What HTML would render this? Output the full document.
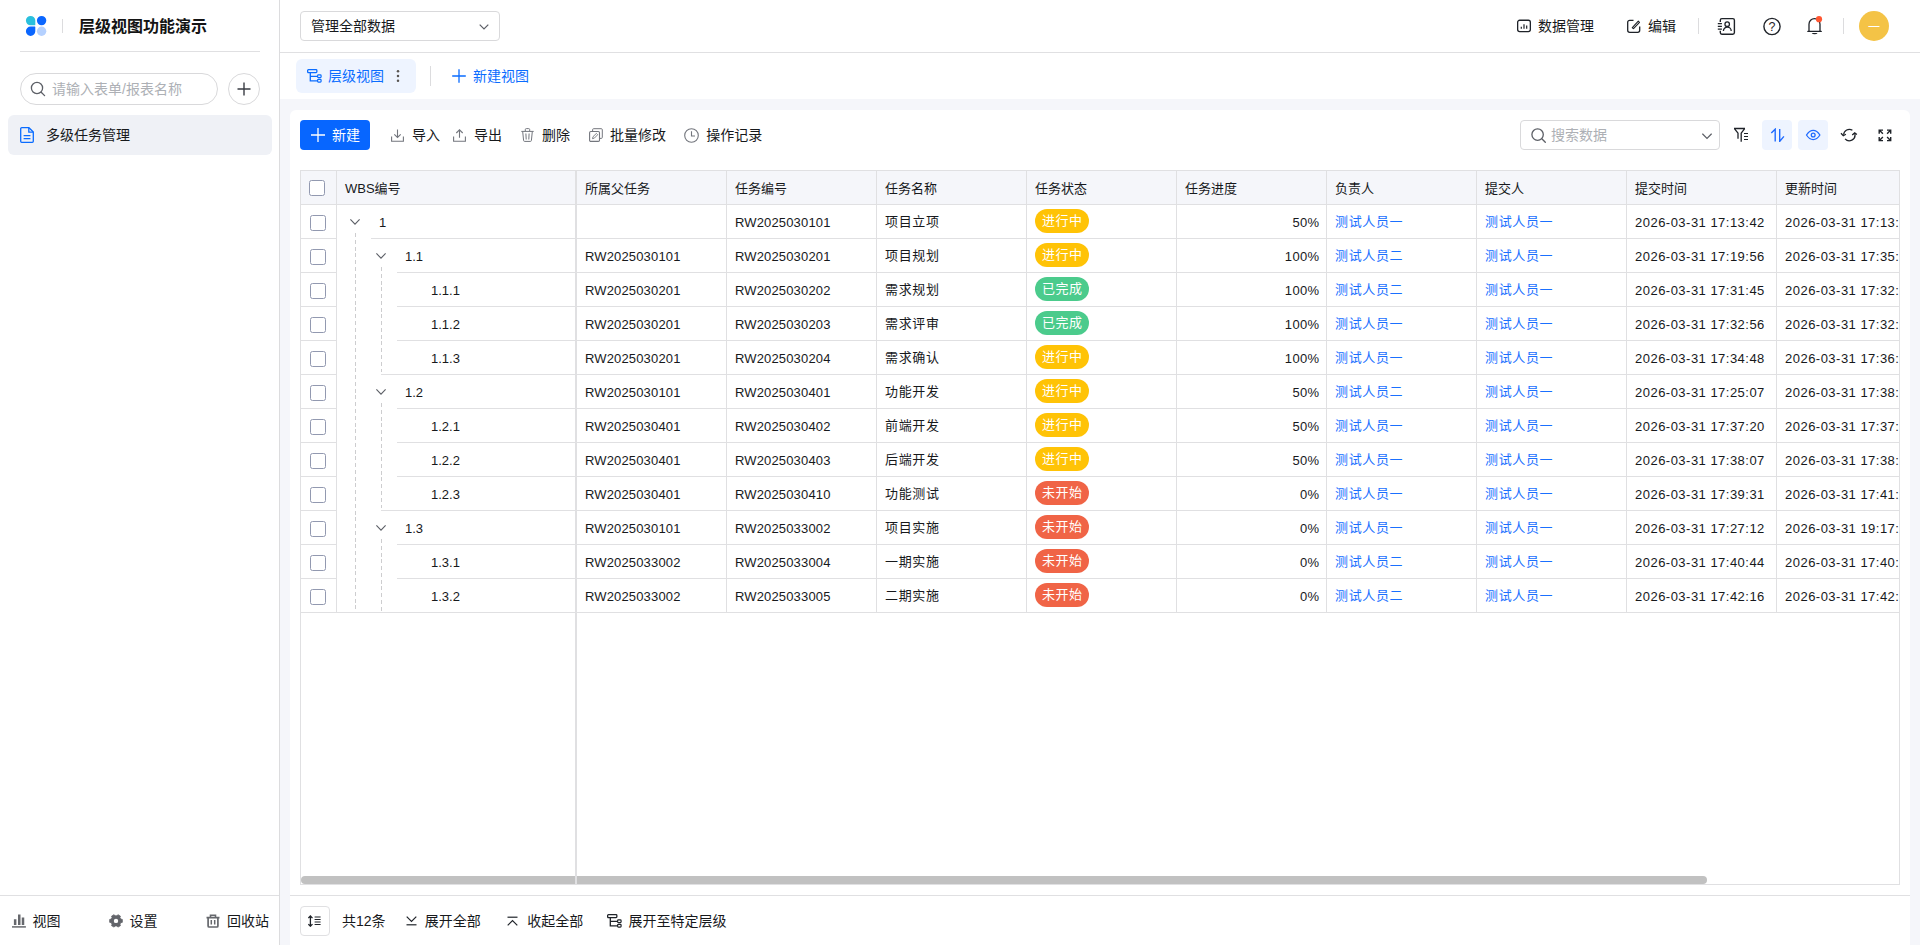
<!DOCTYPE html>
<html lang="zh-CN">
<head>
<meta charset="utf-8">
<title>层级视图功能演示</title>
<style>
*{box-sizing:border-box;margin:0;padding:0}
html,body{width:1920px;height:945px;overflow:hidden}
body{position:relative;background:#f5f6fa;font-family:"Liberation Sans","Noto Sans CJK SC",sans-serif;font-size:14px;color:#17191c;-webkit-font-smoothing:antialiased}
svg{display:block;flex:none}
a{color:#1a70ff;text-decoration:none}
span{white-space:nowrap}
/* ---------- sidebar */
.sidebar{position:absolute;left:0;top:0;width:280px;height:945px;background:#fff;border-right:1px solid #dcdcde}
.logo{position:absolute;left:25px;top:15px;width:22px;height:22px}
.logo-div{position:absolute;left:62px;top:19px;width:1px;height:14px;background:#dcdcde}
.app-title{position:absolute;left:79px;top:14px;height:24px;line-height:24px;font-size:16px;font-weight:700;color:#141414}
.side-line{position:absolute;left:20px;top:51px;width:240px;height:1px;background:#e0e0e2}
.side-search{position:absolute;left:20px;top:73px;width:198px;height:32px;border:1px solid #d9d9db;border-radius:16px;display:flex;align-items:center;padding-left:10px;background:#fff}
.side-search .ph{margin-left:7px;color:#adb0b5;font-size:14px;line-height:20px}
.side-add{position:absolute;left:228px;top:73px;width:32px;height:32px;border:1px solid #d9d9db;border-radius:50%;display:flex;align-items:center;justify-content:center}
.side-item{position:absolute;left:8px;top:115px;width:264px;height:40px;border-radius:6px;background:#eff1f6;display:flex;align-items:center;padding-left:12px;color:#17191c}
.side-item span{margin-left:12px;line-height:20px}
.side-foot{position:absolute;left:0;top:895px;width:279px;height:50px;border-top:1px solid #e0e0e2}
.sf{position:absolute;top:15px;height:20px;display:flex;align-items:center;line-height:20px;color:#17191c}
.sf span{margin-left:6px}
.sf1{left:12px}.sf2{left:109px}.sf3{left:206px}
/* ---------- topbar */
.topbar{position:absolute;left:280px;top:0;width:1640px;height:53px;background:#fff;border-bottom:1px solid #e0e0e2}
.sel{position:absolute;left:20px;top:11px;width:200px;height:30px;border:1px solid #d9d9db;border-radius:4px;display:flex;align-items:center;padding-left:10px;line-height:20px}
.sel svg{position:absolute;right:10px;top:10px}
.tb-item{position:absolute;top:16px;height:20px;display:flex;align-items:center;line-height:20px}
.tb-item span{margin-left:7px}
.t-data{left:1237px}.t-edit{left:1347px}
.vdiv{position:absolute;top:18px;width:1px;height:16px;background:#dcdcde}
.vd1{left:1418px}.vd2{left:1563px}
.ico{position:absolute;top:16px;width:20px;height:20px}
.i-contact{left:1437px}.i-help{left:1482px}.i-bell{left:1524px}
.avatar{position:absolute;left:1579px;top:11px;width:30px;height:30px;border-radius:50%;background:#f4c346;color:#fff;display:flex;align-items:center;justify-content:center;font-size:12px;line-height:30px}
/* ---------- tabs */
.tabbar{position:absolute;left:280px;top:53px;width:1640px;height:46px;background:#fff}
.tab-active{position:absolute;left:16px;top:6px;width:120px;height:34px;border-radius:6px;background:#eef4ff;color:#0a6cff;display:flex;align-items:center;padding-left:11px;line-height:20px}
.tab-active span{margin-left:7px}
.tab-active svg.dots{margin-left:10px}
.tab-div{position:absolute;left:150px;top:14px;width:1px;height:18px;background:#dcdcde}
.tab-new{position:absolute;left:172px;top:13px;height:20px;display:flex;align-items:center;color:#0a6cff;line-height:20px}
.tab-new span{margin-left:7px}
/* ---------- card */
.card{position:absolute;left:290px;top:110px;width:1620px;height:835px;background:#fff;border-radius:6px 6px 0 0}
.btn-new{position:absolute;left:10px;top:10px;width:70px;height:30px;border-radius:4px;background:#0a6cff;color:#fff;display:flex;align-items:center;padding-left:11px;line-height:20px}
.btn-new span{margin-left:8px}
.tool{position:absolute;top:15px;height:20px;display:flex;align-items:center;line-height:20px;color:#17191c}
.tool span{margin-left:8px}
.tl-import{left:101px}.tl-export{left:163px}.tl-del{left:231px}.tl-batch{left:298px}.tl-log{left:394px}
.search{position:absolute;left:1230px;top:10px;width:200px;height:30px;border:1px solid #d9d9db;border-radius:4px;display:flex;align-items:center;padding-left:10px}
.search .ph{margin-left:6px;color:#adb0b5;line-height:20px}
.search svg.cv{position:absolute;right:7px;top:10px}
.tbtn{position:absolute;top:10px;width:30px;height:30px;border-radius:4px;display:flex;align-items:center;justify-content:center}
.tbtn.on{background:#eef4ff}
.b-filter{left:1436px}.b-sort{left:1472px}.b-eye{left:1508px}.b-refresh{left:1544px}.b-full{left:1580px}
/* ---------- grid */
.grid{position:absolute;left:10px;top:60px;width:1600px;height:715px;overflow:hidden;font-size:13px}
.grid::after{content:"";position:absolute;left:0;top:0;right:0;bottom:0;border:1px solid #e0e0e2;pointer-events:none}
.thead,.tr{position:absolute;left:0;width:1700px}
.thead{top:0;height:35px;background:#f5f6fa;font-size:13px}
.thead .c{height:35px;padding-top:1px;color:#17191c}
.tr{height:34px}
.c{position:absolute;top:0;height:34px;border-right:1px solid #e0e0e2;border-bottom:1px solid #e0e0e2;display:flex;align-items:center;padding-left:8px;overflow:hidden}
.c span,.c a{line-height:20px}
.c-chk{left:0;width:37px;padding-left:10px}
.thead .c-chk{padding-left:9px}
.c-wbs{left:37px;width:238px;border-right:none;border-bottom:none}
.thead .c-wbs{border-bottom:1px solid #e0e0e2}
.c-par{left:277px;width:150px}
.c-code{left:427px;width:150px}
.c-name{left:577px;width:150px}
.c-st{left:727px;width:150px}
.c-pg{left:877px;width:150px;justify-content:flex-end;padding-right:7px}
.thead .c-pg{justify-content:flex-start}
.c-own{left:1027px;width:150px}
.c-sub{left:1177px;width:150px}
.c-t1{left:1327px;width:150px}
.c-t2{left:1477px;width:150px}
.cb{display:block;width:16px;height:16px;border:1px solid #9299b0;border-radius:2.5px;background:#fff;flex:none}
.tr .c-wbs::after{content:"";position:absolute;left:0;right:0;bottom:0;height:1px;background:#e0e0e2}
.tr .c-wbs.bl-1::after{left:34px}
.tr .c-wbs.bl-2::after{left:60px}
.tr .c-wbs.bl-1x::after{left:44px}
.tr .c-wbs svg{position:absolute;top:14px}
.lv0 svg{left:13px}.lv1 svg{left:39px}.lv2 svg{left:65px}
.tr .lv0{padding-left:42px}.tr .lv1{padding-left:68px}.tr .lv2{padding-left:94px}
.pill{display:block;height:24px;line-height:24px;padding:0 7px;letter-spacing:.45px;margin-top:-1px;border-radius:12px;color:#fff;font-size:13px;font-weight:400;white-space:nowrap}
.s-doing{background:#ffc306}
.s-done{background:#4bcb8c}
.s-todo{background:#f06446}
.guide{position:absolute;width:1px;background:repeating-linear-gradient(to bottom,#cdcdcf 0,#cdcdcf 4px,transparent 4px,transparent 6.77px)}
.g0{left:55px;top:63px;height:378px}
.g1a{left:81px;top:97px;height:105px}
.g1b{left:81px;top:233px;height:105px}
.g1c{left:81px;top:369px;height:72px}
.wbs-cover{display:none}
.freeze{position:absolute;left:275px;top:0;width:2px;height:715px;background:#e0e0e2}
.emptyline{display:none}
.hscroll{position:absolute;left:1px;top:706px;width:1406px;height:8px;border-radius:4px;background:#c1c1c1}
/* ---------- footer */
.foot-line{position:absolute;left:0;top:785px;width:1620px;height:1px;background:#e0e0e2}
.fbtn{position:absolute;left:10px;top:796px;width:30px;height:30px;border:1px solid #e0e0e2;border-radius:4px;display:flex;align-items:center;justify-content:center}
.ft{position:absolute;top:801px;height:20px;display:flex;align-items:center;line-height:20px;color:#17191c}
.ft svg{margin-right:7px}
.ft-total{left:52px}.ft-exp{left:114px}.ft-col{left:216px}.ft-lvl{left:318px}

.tr .c-name span,.tr a{font-size:13px;letter-spacing:.65px;position:relative;top:.5px}
.tr .c-par span,.tr .c-code span{letter-spacing:.15px}
.tr .c-par span,.tr .c-code span,.tr .c-pg span,.tr .c-t1 span,.tr .c-t2 span,.tr .c-wbs span{position:relative;top:1px}
.thead .c span{position:relative;top:.5px}
.tr .c-t1 span,.tr .c-t2 span{letter-spacing:.4px}
.app-title{top:15px}
.side-search{padding-left:9px}
.side-search .ph{margin-left:6px}

.avatar span{position:relative;top:1.500px}
.i-help{top:15.500px;height:21px}
.btn-new{background:#0766ff}
.btn-new span{margin-left:7px}
.search .ph{margin-left:5px}

.sf1 span{margin-left:6.500px}
.sf2 span{margin-left:6.500px}
.sf3 span{margin-left:7px}
.ft-exp{left:115.500px}.ft-exp svg{margin-right:8.300px}
.ft-col{left:216.800px}.ft-col svg{margin-right:9.500px}
.ft-lvl{left:317.200px}.ft-lvl svg{margin-right:6.300px}
.b-filter svg{position:relative;top:-.8px}

.tab-active span{margin-left:6px}
.tab-active svg.dots{margin-left:11.500px}
.tab-div{top:13px;height:20px}
.tr .c-t1 span,.tr .c-t2 span{letter-spacing:.48px}

.tl-batch{left:299px}.tl-batch span{margin-left:7px}
.tl-log span{margin-left:7.300px}
.tr .cb{position:relative;top:1px}
.freeze{z-index:2}
.thead .c span{top:1px}
.tr .c-pg span{letter-spacing:.3px}
.c-pg{padding-right:6.700px}
.fbtn svg{position:relative;left:-.5px}
</style>
</head>
<body>
<div class="sidebar">
 <div class="logo"><svg width="22" height="22" viewBox="0 0 22 22" fill="none" ><path d="M5.6 0.9a4.7 4.7 0 0 1 4.7 4.7v4.2a.5.5 0 0 1-.5.5H5.6a4.7 4.7 0 0 1 0-9.4z" fill="#2ac0dd"/><path d="M16.6 0.9a4.7 4.7 0 1 1 0 9.4a4.7 4.7 0 0 1 0-9.4z" fill="#0a66ff"/><path d="M5.6 11.6h4.2a.5.5 0 0 1 .5.5v4.2a4.7 4.7 0 1 1-4.7-4.7z" fill="#0a66ff"/><path d="M16.6 11.6a4.7 4.7 0 1 1 0 9.4a4.7 4.7 0 0 1 0-9.4z" fill="#b5d1ff"/></svg></div>
 <div class="logo-div"></div>
 <div class="app-title">层级视图功能演示</div>
 <div class="side-line"></div>
 <div class="side-search"><svg width="16" height="16" viewBox="0 0 16 16" fill="none" ><circle cx="7" cy="7" r="5.6" stroke="#5c5f66" stroke-width="1.3"/><path d="M11.2 11.2L14.6 14.6" stroke="#5c5f66" stroke-width="1.3" stroke-linecap="round"/></svg><span class="ph">请输入表单/报表名称</span></div>
 <div class="side-add"><svg width="14" height="14" viewBox="0 0 14 14" fill="none" ><path d="M7 0.5V13.5M0.5 7H13.5" stroke="#3a3d44" stroke-width="1.4"/></svg></div>
 <div class="side-item"><svg width="14" height="16" viewBox="0 0 14 16" fill="none" ><path d="M1.6 0.7H9L13.3 5V14.3a1 1 0 0 1-1 1H1.7a1 1 0 0 1-1-1V1.7a1 1 0 0 1 1-1z" stroke="#0a6cff" stroke-width="1.3" stroke-linejoin="round"/><path d="M8.8 0.9V5.2H13.1" stroke="#0a6cff" stroke-width="1.3" stroke-linejoin="round"/><path d="M3.6 8.6H10.4M3.6 11.6H10.4" stroke="#0a6cff" stroke-width="1.3"/></svg><span>多级任务管理</span></div>
 <div class="side-foot">
  <div class="sf sf1"><svg width="14" height="14" viewBox="0 0 14 14" fill="none" ><path d="M3.150 5.200V11M7.250 0.600V11M11 3.400V11" stroke="#66686d" stroke-width="2.500"/><path d="M0 12.900H13.900" stroke="#66686d" stroke-width="1.500"/></svg><span>视图</span></div>
  <div class="sf sf2"><svg width="14" height="14" viewBox="0 0 14 14" fill="none" ><path d="M11.76 5.07L13.33 5.44L13.33 8.36L11.76 8.73L10.96 10.11L11.43 11.65L8.90 13.12L7.80 11.94L6.20 11.94L5.10 13.12L2.57 11.65L3.04 10.11L2.24 8.73L0.67 8.36L0.67 5.44L2.24 5.07L3.04 3.69L2.57 2.15L5.10 0.68L6.20 1.86L7.80 1.86L8.90 0.68L11.43 2.15L10.96 3.69z" fill="#63656b" stroke="#63656b" stroke-width="0.800" stroke-linejoin="round"/><circle cx="7" cy="6.900" r="2.200" fill="#fff"/></svg><span>设置</span></div>
  <div class="sf sf3"><svg width="14" height="14" viewBox="0 0 14 14" fill="none" ><path d="M0.500 3.600H13.500M4.500 3.300V1.300H9.500V3.300" stroke="#66686d" stroke-width="1.600"/><path d="M2.100 3.700V12a1 1 0 0 0 1 1h7.800a1 1 0 0 0 1-1V3.700" stroke="#66686d" stroke-width="1.700"/><path d="M5.300 6V10.600M8.700 6V10.600" stroke="#66686d" stroke-width="1.500"/></svg><span>回收站</span></div>
 </div>
</div>
<div class="topbar">
 <div class="sel"><span>管理全部数据</span><svg width="10" height="10" viewBox="0 0 10 10" fill="none" ><path d="M0.700 2.700L5 7L9.300 2.700" stroke="#5c5f66" stroke-width="1.200"/></svg></div>
 <div class="tb-item t-data"><svg width="14" height="14" viewBox="0 0 14 14" fill="none" ><rect x="0.650" y="1.250" width="12.700" height="11.300" rx="2" stroke="#1f2329" stroke-width="1.300"/><path d="M4.300 7.800V9.800M7 5.200V9.800M9.700 6.600V9.800" stroke="#1f2329" stroke-width="1.200"/></svg><span>数据管理</span></div>
 <div class="tb-item t-edit"><svg width="14" height="14" viewBox="0 0 14 14" fill="none" ><path d="M6.500 1.300H2.700a2 2 0 0 0-2 2v8a2 2 0 0 0 2 2h8a2 2 0 0 0 2-2V7.500" stroke="#1f2329" stroke-width="1.300"/><path d="M5.300 8.700L11.300 2.200L12.500 3.300L6.500 9.600z" stroke="#1f2329" stroke-width="1.100" stroke-linejoin="round"/></svg><span>编辑</span></div>
 <div class="vdiv vd1"></div>
 <div class="ico i-contact"><svg width="20" height="20" viewBox="0 0 20 20" fill="none" ><path d="M3.300 6V4.200a1.600 1.600 0 0 1 1.600-1.600H15.800a1.600 1.600 0 0 1 1.600 1.600V16.600a1.600 1.600 0 0 1-1.600 1.600H4.900a1.600 1.600 0 0 1-1.600-1.600V14.800" stroke="#1f2329" stroke-width="1.400"/><path d="M0.800 7.600H4.900M0.800 10.400H4.900M0.800 13.200H4.900" stroke="#1f2329" stroke-width="1.200"/><circle cx="10.200" cy="8.200" r="2.250" stroke="#1f2329" stroke-width="1.300"/><path d="M6.400 15a3.900 3.900 0 0 1 7.800 0" stroke="#1f2329" stroke-width="1.300"/></svg></div>
 <div class="ico i-help"><svg width="20" height="21" viewBox="0 0 20 21" fill="none" ><circle cx="10" cy="10.500" r="8.100" stroke="#1f2329" stroke-width="1.400"/><text x="9.950" y="15.200" font-family="Liberation Sans, sans-serif" font-size="12.500" text-anchor="middle" fill="#1f2329">?</text></svg></div>
 <div class="ico i-bell"><svg width="20" height="20" viewBox="0 0 20 20" fill="none" ><path d="M5 15.200V8.200a5.500 5.500 0 0 1 11 0V15.200" stroke="#1f2329" stroke-width="1.300"/><path d="M3.900 15.400H17.200" stroke="#1f2329" stroke-width="1.400" stroke-linecap="round"/><path d="M7.700 17a3.200 2.200 0 0 0 5.900 0z" fill="#1f2329"/><circle cx="15" cy="3.200" r="3.100" fill="#ff5631"/></svg></div>
 <div class="vdiv vd2"></div>
 <div class="avatar"><span>一</span></div>
</div>
<div class="tabbar">
 <div class="tab-active"><svg width="15" height="14" viewBox="0 0 15 14" fill="none" ><rect x="0.650" y="0.650" width="9.200" height="3" rx="0.800" stroke="#0a6cff" stroke-width="1.300"/><path d="M3.300 3.700V11.800H10.300M3.300 7.300H10.300" stroke="#0a6cff" stroke-width="1.300"/><rect x="10.600" y="5.900" width="3.500" height="2.700" rx="0.800" stroke="#0a6cff" stroke-width="1.200"/><rect x="10.600" y="10.400" width="3.500" height="2.700" rx="0.800" stroke="#0a6cff" stroke-width="1.200"/></svg><span>层级视图</span><svg class="dots" width="4" height="14" viewBox="0 0 4 14" fill="none" ><circle cx="2" cy="2.200" r="1.250" fill="#595552"/><circle cx="2" cy="7" r="1.250" fill="#595552"/><circle cx="2" cy="11.800" r="1.250" fill="#595552"/></svg></div>
 <div class="tab-div"></div>
 <div class="tab-new"><svg width="14" height="14" viewBox="0 0 14 14" fill="none" ><path d="M7 0.200V13.800M0.200 7H13.800" stroke="#0a6cff" stroke-width="1.300"/></svg><span>新建视图</span></div>
</div>
<div class="card">
 <div class="btn-new"><svg width="14" height="14" viewBox="0 0 14 14" fill="none" ><path d="M7 0V14M0 7H14" stroke="#fff" stroke-width="1.300"/></svg><span>新建</span></div>
 <div class="tool tl-import"><svg width="13" height="13" viewBox="0 0 13 13" fill="none" ><path d="M6.500 0.500V8.300M3.300 5.300L6.500 8.500L9.700 5.300" stroke="#73767d" stroke-width="1.100"/><path d="M0.600 7.500V12.300H12.400V7.500" stroke="#73767d" stroke-width="1.100"/></svg><span>导入</span></div>
 <div class="tool tl-export"><svg width="13" height="13" viewBox="0 0 13 13" fill="none" ><path d="M6.500 8.800V0.900M3.300 4L6.500 0.800L9.700 4" stroke="#73767d" stroke-width="1.100"/><path d="M0.600 7.500V12.300H12.400V7.500" stroke="#73767d" stroke-width="1.100"/></svg><span>导出</span></div>
 <div class="tool tl-del"><svg width="13" height="14" viewBox="0 0 13 14" fill="none" ><path d="M0.300 3.400H12.700M4.300 3.300V1.600a1 1 0 0 1 1-1h2.400a1 1 0 0 1 1 1V3.300" stroke="#73767d" stroke-width="1"/><path d="M1.700 3.600L2.600 12.500a1 1 0 0 0 1 .9h5.800a1 1 0 0 0 1-.9L11.300 3.600" stroke="#73767d" stroke-width="1"/><path d="M4.900 5.500L5.200 11.500M8.100 5.500L7.800 11.500" stroke="#73767d" stroke-width="1"/></svg><span>删除</span></div>
 <div class="tool tl-batch"><svg width="14" height="14" viewBox="0 0 14 14" fill="none" ><path d="M3.600 3.400V1.700a1 1 0 0 1 1-1h7.700a1 1 0 0 1 1 1v7.700a1 1 0 0 1-1 1H10.600" stroke="#73767d" stroke-width="1"/><rect x="0.600" y="3.500" width="9.900" height="9.900" rx="1.200" stroke="#73767d" stroke-width="1.100"/><path d="M3.500 10.700L4 8.700L7.400 5.400L8.700 6.700L5.400 10.100z" stroke="#73767d" stroke-width="0.900" stroke-linejoin="round"/></svg><span>批量修改</span></div>
 <div class="tool tl-log"><svg width="15" height="15" viewBox="0 0 15 15" fill="none" ><circle cx="7.500" cy="7.500" r="6.800" stroke="#73767d" stroke-width="1.100"/><path d="M7.500 3.200V8H11" stroke="#73767d" stroke-width="1.100"/></svg><span>操作记录</span></div>
 <div class="search"><svg width="15" height="15" viewBox="0 0 15 15" fill="none" ><circle cx="6.600" cy="6.600" r="5.700" stroke="#5c5f66" stroke-width="1.300"/><path d="M10.800 10.800L14.300 14.300" stroke="#5c5f66" stroke-width="1.300" stroke-linecap="round"/></svg><span class="ph">搜索数据</span><svg class="cv" width="10" height="10" viewBox="0 0 10 10" fill="none" ><path d="M0.400 2.700L5 7.300L9.600 2.700" stroke="#5c5f66" stroke-width="1.200"/></svg></div>
 <div class="tbtn b-filter"><svg width="16" height="15" viewBox="0 0 16 15" fill="none" ><path d="M1 1.500H12M1.400 1.700L5 6.200V11.700M11.700 1.700L8.200 6.200V14.700" stroke="#1f2329" stroke-width="1.300" stroke-linejoin="round"/><path d="M11 6.500H15M11 9.500H15M11 12.500H15" stroke="#1f2329" stroke-width="1.200"/></svg></div>
 <div class="tbtn b-sort on"><svg width="16" height="14" viewBox="0 0 16 14" fill="none" ><path d="M6.200 13.500V1.200L2.300 5.100" stroke="#1f6bff" stroke-width="1.400"/><path d="M10.700 1V13.400L14.900 8.400" stroke="#1f6bff" stroke-width="1.400"/></svg></div>
 <div class="tbtn b-eye on"><svg width="16" height="12" viewBox="0 0 16 12" fill="none" ><path d="M1.500 6C3.500 2.900 5.600 1.400 8.200 1.400S12.900 2.900 14.900 6C12.900 9.100 10.800 10.600 8.200 10.600S3.500 9.100 1.500 6z" stroke="#1f6bff" stroke-width="1.300" stroke-linejoin="round"/><circle cx="8.200" cy="6" r="1.900" stroke="#1f6bff" stroke-width="1.300"/></svg></div>
 <div class="tbtn b-refresh"><svg width="18" height="14" viewBox="0 0 18 14" fill="none" ><path d="M12.400 2.300A5.700 5.700 0 0 0 3.600 6.800" stroke="#1f2329" stroke-width="1.300"/><path d="M1 5.200L3.300 7.700L5.900 6.300" stroke="#1f2329" stroke-width="1.300"/><path d="M5.100 10.900A5.700 5.700 0 0 0 14.900 6" stroke="#1f2329" stroke-width="1.300"/><path d="M12.200 6.900L14.700 4.900L16.900 6.600" stroke="#1f2329" stroke-width="1.300"/></svg></div>
 <div class="tbtn b-full"><svg width="14" height="13" viewBox="0 0 14 13" fill="none" ><path d="M1.200 4.800V1.100H5M1.400 1.300L4.900 4.700M9 1.100H12.700V4.800M12.500 1.300L9.100 4.700M1.200 7.900V11.600H5M1.400 11.400L4.900 8M12.700 7.900V11.600H9M12.500 11.400L9.100 8" stroke="#1f2329" stroke-width="1.400"/></svg></div>
 <div class="grid">
  <div class="thead">
   <div class="c c-chk"><i class="cb"></i></div>
   <div class="c c-wbs"><span>WBS编号</span></div>
   <div class="c c-par"><span>所属父任务</span></div>
   <div class="c c-code"><span>任务编号</span></div>
   <div class="c c-name"><span>任务名称</span></div>
   <div class="c c-st"><span>任务状态</span></div>
   <div class="c c-pg"><span>任务进度</span></div>
   <div class="c c-own"><span>负责人</span></div>
   <div class="c c-sub"><span>提交人</span></div>
   <div class="c c-t1"><span>提交时间</span></div>
   <div class="c c-t2"><span>更新时间</span></div>
  </div>
  <div class="tr" style="top:35px">
   <div class="c c-chk"><i class="cb"></i></div>
   <div class="c c-wbs lv0 bl-1"><svg width="10" height="6" viewBox="0 0 10 6" fill="none" ><path d="M0.400 0.400L5 5.200L9.600 0.400" stroke="#5c5f66" stroke-width="1.100"/></svg><span>1</span></div>
   <div class="c c-par"><span></span></div>
   <div class="c c-code"><span>RW2025030101</span></div>
   <div class="c c-name"><span>项目立项</span></div>
   <div class="c c-st"><b class="pill s-doing">进行中</b></div>
   <div class="c c-pg"><span>50%</span></div>
   <div class="c c-own"><a>测试人员一</a></div>
   <div class="c c-sub"><a>测试人员一</a></div>
   <div class="c c-t1"><span>2026-03-31 17:13:42</span></div>
   <div class="c c-t2"><span>2026-03-31 17:13:42</span></div>
  </div>
  <div class="tr" style="top:69px">
   <div class="c c-chk"><i class="cb"></i></div>
   <div class="c c-wbs lv1 bl-2"><svg width="10" height="6" viewBox="0 0 10 6" fill="none" ><path d="M0.400 0.400L5 5.200L9.600 0.400" stroke="#5c5f66" stroke-width="1.100"/></svg><span>1.1</span></div>
   <div class="c c-par"><span>RW2025030101</span></div>
   <div class="c c-code"><span>RW2025030201</span></div>
   <div class="c c-name"><span>项目规划</span></div>
   <div class="c c-st"><b class="pill s-doing">进行中</b></div>
   <div class="c c-pg"><span>100%</span></div>
   <div class="c c-own"><a>测试人员二</a></div>
   <div class="c c-sub"><a>测试人员一</a></div>
   <div class="c c-t1"><span>2026-03-31 17:19:56</span></div>
   <div class="c c-t2"><span>2026-03-31 17:35:12</span></div>
  </div>
  <div class="tr" style="top:103px">
   <div class="c c-chk"><i class="cb"></i></div>
   <div class="c c-wbs lv2 bl-2"><span>1.1.1</span></div>
   <div class="c c-par"><span>RW2025030201</span></div>
   <div class="c c-code"><span>RW2025030202</span></div>
   <div class="c c-name"><span>需求规划</span></div>
   <div class="c c-st"><b class="pill s-done">已完成</b></div>
   <div class="c c-pg"><span>100%</span></div>
   <div class="c c-own"><a>测试人员二</a></div>
   <div class="c c-sub"><a>测试人员一</a></div>
   <div class="c c-t1"><span>2026-03-31 17:31:45</span></div>
   <div class="c c-t2"><span>2026-03-31 17:32:10</span></div>
  </div>
  <div class="tr" style="top:137px">
   <div class="c c-chk"><i class="cb"></i></div>
   <div class="c c-wbs lv2 bl-2"><span>1.1.2</span></div>
   <div class="c c-par"><span>RW2025030201</span></div>
   <div class="c c-code"><span>RW2025030203</span></div>
   <div class="c c-name"><span>需求评审</span></div>
   <div class="c c-st"><b class="pill s-done">已完成</b></div>
   <div class="c c-pg"><span>100%</span></div>
   <div class="c c-own"><a>测试人员一</a></div>
   <div class="c c-sub"><a>测试人员一</a></div>
   <div class="c c-t1"><span>2026-03-31 17:32:56</span></div>
   <div class="c c-t2"><span>2026-03-31 17:32:56</span></div>
  </div>
  <div class="tr" style="top:171px">
   <div class="c c-chk"><i class="cb"></i></div>
   <div class="c c-wbs lv2 bl-1x"><span>1.1.3</span></div>
   <div class="c c-par"><span>RW2025030201</span></div>
   <div class="c c-code"><span>RW2025030204</span></div>
   <div class="c c-name"><span>需求确认</span></div>
   <div class="c c-st"><b class="pill s-doing">进行中</b></div>
   <div class="c c-pg"><span>100%</span></div>
   <div class="c c-own"><a>测试人员一</a></div>
   <div class="c c-sub"><a>测试人员一</a></div>
   <div class="c c-t1"><span>2026-03-31 17:34:48</span></div>
   <div class="c c-t2"><span>2026-03-31 17:36:02</span></div>
  </div>
  <div class="tr" style="top:205px">
   <div class="c c-chk"><i class="cb"></i></div>
   <div class="c c-wbs lv1 bl-2"><svg width="10" height="6" viewBox="0 0 10 6" fill="none" ><path d="M0.400 0.400L5 5.200L9.600 0.400" stroke="#5c5f66" stroke-width="1.100"/></svg><span>1.2</span></div>
   <div class="c c-par"><span>RW2025030101</span></div>
   <div class="c c-code"><span>RW2025030401</span></div>
   <div class="c c-name"><span>功能开发</span></div>
   <div class="c c-st"><b class="pill s-doing">进行中</b></div>
   <div class="c c-pg"><span>50%</span></div>
   <div class="c c-own"><a>测试人员二</a></div>
   <div class="c c-sub"><a>测试人员一</a></div>
   <div class="c c-t1"><span>2026-03-31 17:25:07</span></div>
   <div class="c c-t2"><span>2026-03-31 17:38:30</span></div>
  </div>
  <div class="tr" style="top:239px">
   <div class="c c-chk"><i class="cb"></i></div>
   <div class="c c-wbs lv2 bl-2"><span>1.2.1</span></div>
   <div class="c c-par"><span>RW2025030401</span></div>
   <div class="c c-code"><span>RW2025030402</span></div>
   <div class="c c-name"><span>前端开发</span></div>
   <div class="c c-st"><b class="pill s-doing">进行中</b></div>
   <div class="c c-pg"><span>50%</span></div>
   <div class="c c-own"><a>测试人员一</a></div>
   <div class="c c-sub"><a>测试人员一</a></div>
   <div class="c c-t1"><span>2026-03-31 17:37:20</span></div>
   <div class="c c-t2"><span>2026-03-31 17:37:20</span></div>
  </div>
  <div class="tr" style="top:273px">
   <div class="c c-chk"><i class="cb"></i></div>
   <div class="c c-wbs lv2 bl-2"><span>1.2.2</span></div>
   <div class="c c-par"><span>RW2025030401</span></div>
   <div class="c c-code"><span>RW2025030403</span></div>
   <div class="c c-name"><span>后端开发</span></div>
   <div class="c c-st"><b class="pill s-doing">进行中</b></div>
   <div class="c c-pg"><span>50%</span></div>
   <div class="c c-own"><a>测试人员一</a></div>
   <div class="c c-sub"><a>测试人员一</a></div>
   <div class="c c-t1"><span>2026-03-31 17:38:07</span></div>
   <div class="c c-t2"><span>2026-03-31 17:38:07</span></div>
  </div>
  <div class="tr" style="top:307px">
   <div class="c c-chk"><i class="cb"></i></div>
   <div class="c c-wbs lv2 bl-1x"><span>1.2.3</span></div>
   <div class="c c-par"><span>RW2025030401</span></div>
   <div class="c c-code"><span>RW2025030410</span></div>
   <div class="c c-name"><span>功能测试</span></div>
   <div class="c c-st"><b class="pill s-todo">未开始</b></div>
   <div class="c c-pg"><span>0%</span></div>
   <div class="c c-own"><a>测试人员一</a></div>
   <div class="c c-sub"><a>测试人员一</a></div>
   <div class="c c-t1"><span>2026-03-31 17:39:31</span></div>
   <div class="c c-t2"><span>2026-03-31 17:41:05</span></div>
  </div>
  <div class="tr" style="top:341px">
   <div class="c c-chk"><i class="cb"></i></div>
   <div class="c c-wbs lv1 bl-2"><svg width="10" height="6" viewBox="0 0 10 6" fill="none" ><path d="M0.400 0.400L5 5.200L9.600 0.400" stroke="#5c5f66" stroke-width="1.100"/></svg><span>1.3</span></div>
   <div class="c c-par"><span>RW2025030101</span></div>
   <div class="c c-code"><span>RW2025033002</span></div>
   <div class="c c-name"><span>项目实施</span></div>
   <div class="c c-st"><b class="pill s-todo">未开始</b></div>
   <div class="c c-pg"><span>0%</span></div>
   <div class="c c-own"><a>测试人员一</a></div>
   <div class="c c-sub"><a>测试人员一</a></div>
   <div class="c c-t1"><span>2026-03-31 17:27:12</span></div>
   <div class="c c-t2"><span>2026-03-31 19:17:33</span></div>
  </div>
  <div class="tr" style="top:375px">
   <div class="c c-chk"><i class="cb"></i></div>
   <div class="c c-wbs lv2 bl-2"><span>1.3.1</span></div>
   <div class="c c-par"><span>RW2025033002</span></div>
   <div class="c c-code"><span>RW2025033004</span></div>
   <div class="c c-name"><span>一期实施</span></div>
   <div class="c c-st"><b class="pill s-todo">未开始</b></div>
   <div class="c c-pg"><span>0%</span></div>
   <div class="c c-own"><a>测试人员二</a></div>
   <div class="c c-sub"><a>测试人员一</a></div>
   <div class="c c-t1"><span>2026-03-31 17:40:44</span></div>
   <div class="c c-t2"><span>2026-03-31 17:40:44</span></div>
  </div>
  <div class="tr" style="top:409px">
   <div class="c c-chk"><i class="cb"></i></div>
   <div class="c c-wbs lv2 bl-none"><span>1.3.2</span></div>
   <div class="c c-par"><span>RW2025033002</span></div>
   <div class="c c-code"><span>RW2025033005</span></div>
   <div class="c c-name"><span>二期实施</span></div>
   <div class="c c-st"><b class="pill s-todo">未开始</b></div>
   <div class="c c-pg"><span>0%</span></div>
   <div class="c c-own"><a>测试人员二</a></div>
   <div class="c c-sub"><a>测试人员一</a></div>
   <div class="c c-t1"><span>2026-03-31 17:42:16</span></div>
   <div class="c c-t2"><span>2026-03-31 17:42:16</span></div>
  </div>
  <div class="guide g0"></div>
  <div class="guide g1a"></div>
  <div class="guide g1b"></div>
  <div class="guide g1c"></div>
  <div class="wbs-cover"></div>
  <div class="freeze"></div>
  <div class="emptyline"></div>
  <div class="hscroll"></div>
 </div>
 <div class="foot-line"></div>
 <div class="fbtn"><svg width="13" height="12" viewBox="0 0 13 12" fill="none" ><path d="M2.400 1V11.200M0.300 3.100L2.400 1L4.500 3.100M0.300 9.100L2.400 11.200L4.500 9.100" stroke="#1f2329" stroke-width="1.300"/><path d="M6.600 2H12.600M6.600 4.500H12.600M6.600 7H12.600M6.600 9.500H12.600" stroke="#1f2329" stroke-width="1.100"/></svg></div>
 <div class="ft ft-total"><span>共12条</span></div>
 <div class="ft ft-exp"><svg width="11" height="10" viewBox="0 0 11 10" fill="none" ><path d="M0.700 0.700L5.500 5.500L10.300 0.700" stroke="#1f2329" stroke-width="1.200"/><path d="M0.500 8.800H10.500" stroke="#1f2329" stroke-width="1.200"/></svg><span>展开全部</span></div>
 <div class="ft ft-col"><svg width="11" height="10" viewBox="0 0 11 10" fill="none" ><path d="M0.500 1.200H10.500" stroke="#1f2329" stroke-width="1.200"/><path d="M0.700 9.300L5.500 4.500L10.300 9.300" stroke="#1f2329" stroke-width="1.200"/></svg><span>收起全部</span></div>
 <div class="ft ft-lvl"><svg width="15" height="14" viewBox="0 0 15 14" fill="none" ><rect x="0.650" y="0.650" width="9.200" height="3" rx="0.800" stroke="#1f2329" stroke-width="1.300"/><path d="M3.300 3.700V11.800H10.300M3.300 7.300H10.300" stroke="#1f2329" stroke-width="1.300"/><rect x="10.600" y="5.900" width="3.500" height="2.700" rx="0.800" stroke="#1f2329" stroke-width="1.200"/><rect x="10.600" y="10.400" width="3.500" height="2.700" rx="0.800" stroke="#1f2329" stroke-width="1.200"/></svg><span>展开至特定层级</span></div>
</div>
</body>
</html>
